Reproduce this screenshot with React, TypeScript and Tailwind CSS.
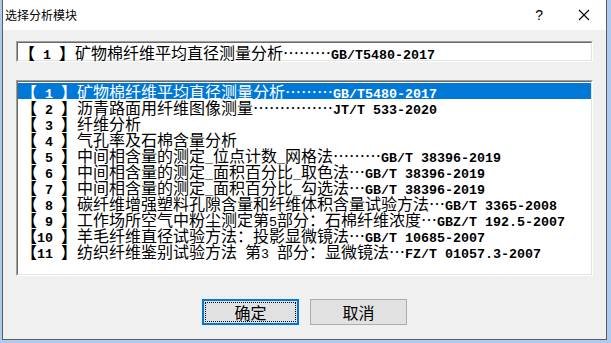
import React from "react";

type Item = { n: string; name: string; dots?: number; code?: string };

const items: Item[] = [
  { n: " 1 ", name: "矿物棉纤维平均直径测量分析", dots: 3, code: "GB/T5480-2017" },
  { n: " 2 ", name: "沥青路面用纤维图像测量", dots: 5, code: "JT/T 533-2020" },
  { n: " 3 ", name: "纤维分析" },
  { n: " 4 ", name: "气孔率及石棉含量分析" },
  { n: " 5 ", name: "中间相含量的测定_位点计数_网格法", dots: 3, code: "GB/T 38396-2019" },
  { n: " 6 ", name: "中间相含量的测定_面积百分比_取色法", dots: 1, code: "GB/T 38396-2019" },
  { n: " 7 ", name: "中间相含量的测定_面积百分比_勾选法", dots: 1, code: "GB/T 38396-2019" },
  { n: " 8 ", name: "碳纤维增强塑料孔隙含量和纤维体积含量试验方法", dots: 1, code: "GB/T 3365-2008" },
  { n: " 9 ", name: "工作场所空气中粉尘测定第5部分：石棉纤维浓度", dots: 1, code: "GBZ/T 192.5-2007" },
  { n: "10 ", name: "羊毛纤维直径试验方法：投影显微镜法", dots: 1, code: "GB/T 10685-2007" },
  { n: "11 ", name: "纺织纤维鉴别试验方法 第3 部分：显微镜法", dots: 1, code: "FZ/T 01057.3-2007" },
];

// half-width characters are drawn in a mono font so they take 8px, like the original
const Mixed = ({ text }: { text: string }) => {
  const runs: { ascii: boolean; s: string }[] = [];
  for (const ch of text) {
    const a = ch.charCodeAt(0) < 128;
    const last = runs[runs.length - 1];
    if (last && last.ascii === a) last.s += ch;
    else runs.push({ ascii: a, s: ch });
  }
  return (
    <>
      {runs.map((r, i) =>
        r.ascii ? (
          <span key={i} className="font-['Liberation_Mono',monospace] text-[13.33px]">
            {r.s}
          </span>
        ) : (
          <span key={i}>{r.s}</span>
        )
      )}
    </>
  );
};

const Entry = ({ item }: { item: Item }) => (
  <>
    <span className="font-bold">【</span>
    <span className="font-['Liberation_Mono',monospace] text-[13.33px] font-bold">{item.n}</span>
    <span className="font-bold">】</span>
    <Mixed text={item.name} />
    {Array.from({ length: item.dots ?? 0 }).map((_, i) => (
      <span key={i} className="inline-block w-4 text-center">
        …
      </span>
    ))}
    {item.code && (
      <span className="font-['Liberation_Mono',monospace] text-[13.33px] font-bold">{item.code}</span>
    )}
  </>
);

const Sunken = ({ className, children }: { className: string; children: React.ReactNode }) => (
  <div className={`border border-t-[#a0a0a0] border-l-[#a0a0a0] border-b-white border-r-white ${className}`}>
    <div className="h-full border border-t-[#696969] border-l-[#696969] border-b-[#e3e3e3] border-r-[#e3e3e3] bg-white">
      {children}
    </div>
  </div>
);

export default function App() {
  return (
    <div className="w-[611px] h-[343px] bg-[#aecbef] pl-[2px] pr-[4px] pb-[3px] font-['Noto_Sans_CJK_SC',sans-serif] text-black">
      <div className="h-full flex flex-col bg-[#f0f0f0] border-l border-r border-b border-[#5c5c5c]">
        {/* title bar */}
        <div className="h-[30px] bg-white flex items-center pl-[2px] shrink-0">
          <span className="text-[12px] leading-none">选择分析模块</span>
          <span className="ml-auto mr-[35px] text-[14px] font-['Liberation_Sans',sans-serif] leading-none">?</span>
          <svg width="12" height="12" viewBox="0 0 12 12" className="mr-[16px]">
            <path d="M1 1 L11 11 M11 1 L1 11" stroke="#000" strokeWidth="1.1" />
          </svg>
        </div>

        <div className="pl-[13px] pt-[11px]">
          <Sunken className="w-[577px] h-[21px]">
            <div className="h-4 mt-[1px] pl-[1px] text-[16px] leading-4 whitespace-pre">
              <Entry item={items[0]} />
            </div>
          </Sunken>

          <Sunken className="w-[577px] h-[196px] mt-[18px]">
            <div className="pt-[1px] text-[16px] leading-4">
              {items.map((it, i) => (
                <div
                  key={i}
                  className={`h-4 pl-[3px] whitespace-pre ${i === 0 ? "bg-[#0078d7] text-white" : ""}`}
                >
                  <Entry item={it} />
                </div>
              ))}
            </div>
          </Sunken>
        </div>

        <div className="flex gap-[11px] pl-[199px] mt-[23px]">
          <button className="w-[97px] h-[26px] border-2 border-[#0078d7] bg-[#e1e1e1] p-[1px]">
            <div className="h-full border border-dotted border-black flex items-center justify-center text-[16px] leading-none">
              确定
            </div>
          </button>
          <button className="w-[97px] h-[26px] border border-[#adadad] bg-[#e1e1e1] flex items-center justify-center text-[16px] leading-none">
            取消
          </button>
        </div>
      </div>
    </div>
  );
}
